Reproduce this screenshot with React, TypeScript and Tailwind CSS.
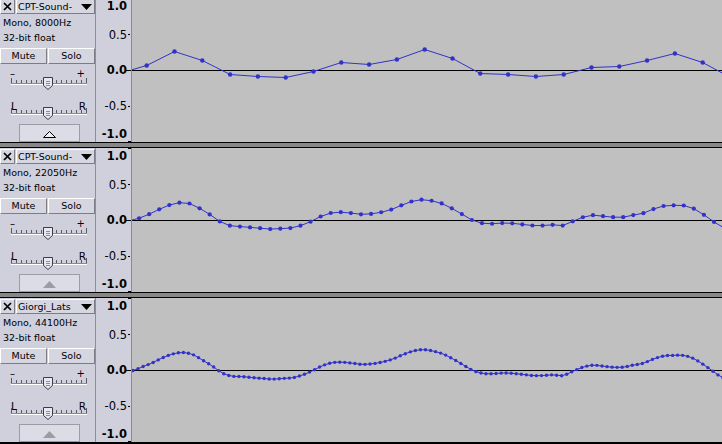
import React from "react";

const K = [
  0.0, 0.055, 0.11, 0.18, 0.23, 0.25, 0.22, 0.14, 0.055, -0.04, -0.08, -0.085, -0.1, -0.11, -0.12,
  -0.11, -0.1, -0.06, 0.0, 0.07, 0.11, 0.115, 0.1, 0.085, 0.095, 0.12, 0.16, 0.22, 0.27, 0.29, 0.27,
  0.23, 0.16, 0.08, 0.0, -0.04, -0.045, -0.035, -0.04, -0.055, -0.07, -0.07, -0.06, -0.07, -0.01,
  0.046, 0.074, 0.06, 0.046, 0.046, 0.074, 0.1, 0.157, 0.2, 0.21, 0.21, 0.17, 0.087, -0.01, -0.1,
];

function curve(x: number): number {
  const f = (x - 133) / 10;
  const i = Math.floor(f);
  const t = f - i;
  const g = (j: number) => K[Math.max(0, Math.min(K.length - 1, j))];
  const p0 = g(i - 1), p1 = g(i), p2 = g(i + 1), p3 = g(i + 2);
  return (
    0.5 *
    (2 * p1 +
      (-p0 + p2) * t +
      (2 * p0 - 5 * p1 + 4 * p2 - p3) * t * t +
      (-p0 + 3 * p1 - 3 * p2 + p3) * t * t * t)
  );
}

type Pt = [number, number];

const T1Y = [73, 65, 51, 60, 74, 76, 77, 71, 62, 64, 59, 49, 58, 73, 74, 76, 74, 67, 66, 60, 53, 62, 77];
const t1: Pt[] = T1Y.map((sy, i) => [146.7 + 27.8 * (i - 1) - 132, sy + 2.5]);

const t2: Pt[] = [];
for (let j = -43; j <= 17; j++) {
  const x = 562.7 + 10.086 * j;
  t2.push([x - 132, 72.5 - curve(x) * 72]);
}

const t3: Pt[] = [];
for (let k = -1; k <= 119; k++) {
  const x = 133 + 5.043 * k;
  t3.push([x - 132, 72.5 - curve(x) * 72]);
}

function Slider() {
  const ticks: number[] = [];
  for (let x = 11; x <= 86; x += 5) ticks.push(x);
  return (
    <svg className="absolute left-0 top-0" width="95" height="30" viewBox="0 0 95 30">
      <g shapeRendering="crispEdges">
        <rect x="11" y="19" width="76" height="1" fill="#8a8a94" />
        <rect x="11" y="20" width="76" height="1" fill="#ffffff" />
        {ticks.map((x) => {
          const end = x === 11 || x === 86;
          return <rect key={x} x={x} y={end ? 14 : 16} width="1" height={end ? 5 : 3} fill="#5a5a64" />;
        })}
      </g>
      <path d="M43.5 13.5 h9 v8 l-4.5 4 l-4.5 -4 z" fill="#e8e8f4" stroke="#3c3c48" />
      <g shapeRendering="crispEdges" fill="#8888c0">
        <rect x="46" y="17" width="4" height="1" />
        <rect x="46" y="19" width="4" height="1" />
        <rect x="46" y="21" width="4" height="1" />
      </g>
    </svg>
  );
}

function Panel({ name, rate, active }: { name: string; rate: string; active?: boolean }) {
  const btn =
    "border border-t-white border-l-white border-r-[#7c7c86] border-b-[#7c7c86] bg-[#d6d6e0]";
  return (
    <div className="flex h-full w-[96px] shrink-0 flex-col border-r border-[#8e8e98] bg-[#d0d0dc] text-[9.5px]">
      <div className="mt-[1px] flex h-[15px] gap-[1px]">
        <div className={`flex w-[15px] items-center justify-center ${btn}`}>
          <svg width="9" height="9" viewBox="0 0 9 9">
            <path d="M1 1 L8 8 M8 1 L1 8" stroke="#000" strokeWidth="1.7" />
          </svg>
        </div>
        <div className={`flex flex-1 items-center justify-between pl-[1px] pr-[2px] leading-[13px] ${btn}`}>
          <span>{name}</span>
          <svg width="11" height="6" viewBox="0 0 11 6">
            <polygon points="0,0 11,0 5.5,6" fill="#000" />
          </svg>
        </div>
      </div>
      <div className="mt-[1px] h-[15px] pl-[3px] leading-[15px]">{rate}</div>
      <div className="h-[15px] pl-[3px] leading-[15px]">32-bit float</div>
      <div className="mt-[3px] flex h-[16px] gap-[1px]">
        <div className={`flex w-[47px] items-center justify-center leading-[14px] ${btn}`}>Mute</div>
        <div className={`flex w-[47px] items-center justify-center leading-[14px] ${btn}`}>Solo</div>
      </div>
      <div className="relative h-[30px]">
        <div className="flex justify-between px-[10px] pt-[4px] text-[10px] leading-[12px]">
          <span>–</span>
          <span>+</span>
        </div>
        <Slider />
      </div>
      <div className="relative h-[30px]">
        <div className="flex justify-between pl-[11px] pr-[9px] pt-[6px] text-[10.5px] leading-[12px]">
          <span>L</span>
          <span>R</span>
        </div>
        <Slider />
      </div>
      <div className="mt-auto ml-[19px] flex h-[18px] w-[61px] items-center justify-center border border-[#9c9ca6] bg-[#dcdce6] pt-[3px]">
        <svg width="13" height="7" viewBox="0 0 13 7">
          {active ? (
            <polygon points="0.5,6.5 6.5,0.5 12.5,6.5" fill="#f0f0f4" stroke="#000" />
          ) : (
            <polygon points="0,7 6.5,0 13,7" fill="#9c9ca4" />
          )}
        </svg>
      </div>
    </div>
  );
}

function Ruler() {
  const labels: { t: string; c: number; b: boolean }[] = [
    { t: "1.0", c: 8, b: true },
    { t: "0.5", c: 37, b: false },
    { t: "0.0", c: 72, b: true },
    { t: "-0.5", c: 108, b: false },
    { t: "-1.0", c: 136, b: true },
  ];
  return (
    <div className="relative h-full w-[36px] shrink-0 border-r border-[#8a8a94] bg-[#d0d0dc] text-[11.5px]">
      {labels.map((l) => (
        <div
          key={l.t}
          className={`absolute right-[4px] h-[14px] leading-[14px] ${l.b ? "font-bold" : "font-normal"}`}
          style={{ top: l.c - 7 }}
        >
          {l.t}
        </div>
      ))}
      <div className="absolute right-0 top-[0px] h-[1px] w-[3px] bg-black" />
      <div className="absolute right-[1px] top-[36px] h-[1px] w-[2px] bg-black" />
      <div className="absolute right-0 top-[72px] h-[1px] w-[5px] bg-black" />
      <div className="absolute right-[1px] top-[108px] h-[1px] w-[2px] bg-black" />
      <div className="absolute right-0 top-[143px] h-[1px] w-[3px] bg-black" />
    </div>
  );
}

function Wave({ pts, r }: { pts: Pt[]; r: number }) {
  return (
    <div className="h-full flex-1 overflow-hidden bg-[#c0c0c0]">
      <svg width="590" height="144" viewBox="0 0 590 144" className="block">
        <rect x="0" y="72" width="590" height="1" fill="#000" shapeRendering="crispEdges" />
        <polyline
          points={pts.map((p) => `${p[0].toFixed(2)},${p[1].toFixed(2)}`).join(" ")}
          fill="none"
          stroke="#3232c8"
          strokeWidth="1"
        />
        {pts.map((p, i) => (
          <circle key={i} cx={p[0]} cy={p[1]} r={r} fill="#3232c8" />
        ))}
      </svg>
    </div>
  );
}

function Track({ name, rate, active, pts, r }: { name: string; rate: string; active?: boolean; pts: Pt[]; r: number }) {
  return (
    <div className="flex h-[144px] shrink-0">
      <Panel name={name} rate={rate} active={active} />
      <Ruler />
      <Wave pts={pts} r={r} />
    </div>
  );
}

function Sep() {
  return (
    <div className="flex shrink-0 flex-col">
      <div className="h-[1px] bg-black" />
      <div className="h-[4px] bg-[#878787]" />
      <div className="h-[1px] bg-black" />
    </div>
  );
}

export default function App() {
  return (
    <div className="h-[444px] w-[722px] overflow-hidden bg-[#c0c0c0] font-['DejaVu_Sans',sans-serif] text-black">
      <div className="mt-[-2px] flex flex-col">
        <Track name="CPT-Sound-" rate="Mono, 8000Hz" active pts={t1} r={2.2} />
        <Sep />
        <Track name="CPT-Sound-" rate="Mono, 22050Hz" pts={t2} r={2.1} />
        <Sep />
        <Track name="Giorgi_Lats" rate="Mono, 44100Hz" pts={t3} r={1.7} />
        <div className="h-[2px] shrink-0 bg-black" />
      </div>
    </div>
  );
}
